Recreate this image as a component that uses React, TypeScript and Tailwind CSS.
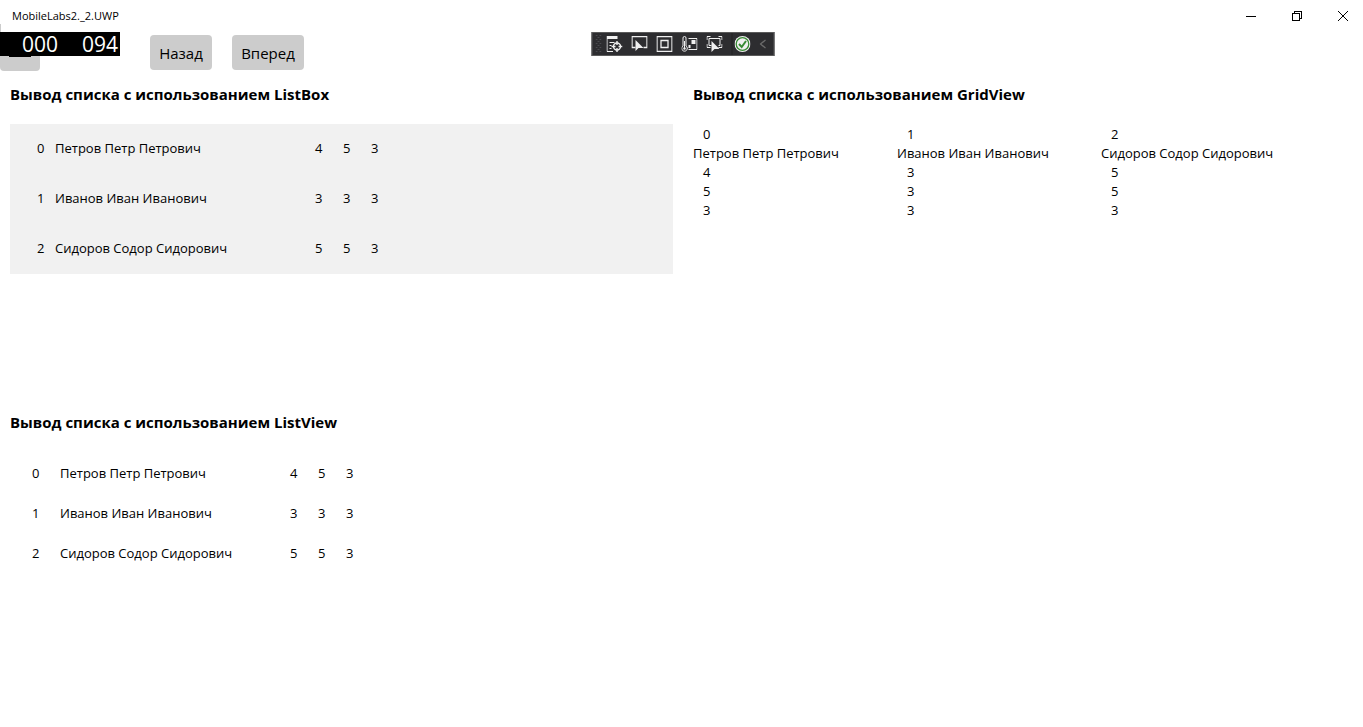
import type { ReactNode } from "react";

type Student = { id: number; name: string; marks: number[] };

const students: Student[] = [
  { id: 0, name: "Петров Петр Петрович", marks: [4, 5, 3] },
  { id: 1, name: "Иванов Иван Иванович", marks: [3, 3, 3] },
  { id: 2, name: "Сидоров Содор Сидорович", marks: [5, 5, 3] },
];

function CaptionButton({ label, children }: { label: string; children: ReactNode }) {
  return (
    <button aria-label={label} className="flex h-8 w-[46px] items-center justify-center">
      <svg width="12" height="12" viewBox="0 0 12 12" fill="none" stroke="#000" shapeRendering="crispEdges">
        {children}
      </svg>
    </button>
  );
}

function TitleBar() {
  return (
    <header className="flex h-8 items-center justify-between pl-3">
      <h1 className="text-[11px] leading-4">MobileLabs2._2.UWP</h1>
      <div className="-mr-[3px] flex">
        <CaptionButton label="Свернуть">
          <path d="M1 6.500h10" />
        </CaptionButton>
        <CaptionButton label="Свернуть в окно">
          <path d="M1.500 3.500h7v7h-7zM3.500 3V1.500h7v7H9" />
        </CaptionButton>
        <CaptionButton label="Закрыть">
          <path d="M1 1l10 10M11 1L1 11" shapeRendering="auto" />
        </CaptionButton>
      </div>
    </header>
  );
}

function ToolButton({ label, children }: { label: string; children: ReactNode }) {
  return (
    <button aria-label={label} className="flex h-full items-center justify-center">
      <svg width="16" height="16" viewBox="0 0 16 16" fill="none" stroke="#f0f0f0">
        {children}
      </svg>
    </button>
  );
}

const POINTER = "M0 0v11l3-3h5z";

function DebugToolbar() {
  return (
    <div
      role="toolbar"
      aria-label="Отладка"
      className="absolute left-[calc(50%+1px)] top-0 flex h-6 w-[183px] -translate-x-1/2 items-center gap-[9px] border border-[#5a5a5a] bg-[#2d2d30] pl-[3px]"
    >
      <svg width="6" height="18" viewBox="0 0 6 18" className="-mr-1 shrink-0 fill-[#4a4a4e]">
        {[0, 4, 8, 12, 16].map((y) => (
          <path key={y} d={`M0 ${y}h2v1h-2zM4 ${y}h2v1h-2zM2 ${y + 2}h2v1h-2z`} />
        ))}
      </svg>
      <ToolButton label="Перейти к динамическому визуальному дереву">
        <path d="M0 1.500h11" strokeWidth="3" />
        <path d="M.5 3v12.500h6M3 6.500h5M3 9.500h2M3 12.500h2" />
        <circle cx="10.500" cy="10.500" r="3.500" strokeWidth="1.400" />
        <path d="M10.500 5v4M10.500 12v4M5 10.500h4M12 10.500h4" strokeWidth="1.400" />
      </ToolButton>
      <ToolButton label="Выбрать элемент">
        <path d="M4 11.500H.5v-11h15v11H12" strokeWidth="1.300" />
        <path d={POINTER} transform="translate(4 4)" fill="#f0f0f0" stroke="none" />
      </ToolButton>
      <ToolButton label="Показать границы">
        <path d="M.5.500h15v15H.5zM4.500 4.500h7v7h-7z" strokeWidth="1.300" />
      </ToolButton>
      <ToolButton label="Производительность">
        <path d="M1.500 10V2a1.500 1.500 0 0 1 3 0v8a2.800 2.800 0 1 1-3 0zM7 2.500h8.500v11H7" />
        <path d="M3 5v7" />
        <path d="M10 4h4v4h-4zM7 9h2v3H7z" fill="#f0f0f0" stroke="none" />
        <circle cx="3" cy="12.500" r="1.200" fill="#f0f0f0" stroke="none" />
      </ToolButton>
      <ToolButton label="Отслеживать фокус">
        <path d="M.5 4V.5H4M12 .5h3.500V4M.5 8v3.500H4M15.500 8v3.500H12M5 9.500H2.500v-7h11v7H12" />
        <path d={POINTER} transform="translate(5 5)" fill="#f0f0f0" stroke="none" />
      </ToolButton>
      <div className="flex h-full gap-[9px] border-l border-[#222] pl-[2px]">
        <ToolButton label="Горячая перезагрузка">
          <circle cx="8" cy="8" r="8" fill="#f0f0f0" stroke="none" />
          <circle cx="8" cy="8" r="6.300" stroke="#388a34" strokeWidth="1.300" />
          <path d="M4.500 8l2.700 3L11.500 5" stroke="#388a34" strokeWidth="2" />
        </ToolButton>
        <button aria-label="Свернуть панель" className="flex h-full items-center">
          <svg width="8" height="10" viewBox="0 0 8 10" fill="none" stroke="#6a6a6a" strokeWidth="1.300">
            <path d="M6 1L1 5l5 4" />
          </svg>
        </button>
      </div>
    </div>
  );
}

function FrameCounter() {
  return (
    <div className="absolute left-0 top-0 h-6 w-[120px] bg-black">
      <div className="absolute -top-2 left-0 h-2 w-px bg-[#ccc]" />
      <div className="flex justify-end gap-6 pr-[2px] text-[21px] leading-6 text-white">
        <span>000</span>
        <span>094</span>
      </div>
      <div className="absolute left-[9px] top-6 h-px w-[22px] bg-black" />
    </div>
  );
}

function NavBar() {
  return (
    <nav className="relative flex h-10 items-start pt-[3px]">
      <button aria-label="Меню" className="h-9 w-10 rounded-sm bg-[#ccc]" />
      <FrameCounter />
      <div className="ml-[110px] flex gap-5 text-[15px] leading-[37px]">
        <button className="h-[35px] w-[62px] rounded-sm bg-[#ccc]">Назад</button>
        <button className="h-[35px] w-[72px] rounded-sm bg-[#ccc]">Вперед</button>
      </div>
      <DebugToolbar />
    </nav>
  );
}

function Section({ title, children }: { title: string; children: ReactNode }) {
  return (
    <section className="px-[10px] pt-3">
      <h2 className="text-[15px] font-bold leading-5">{title}</h2>
      {children}
    </section>
  );
}

function Marks({ marks }: { marks: number[] }) {
  return (
    <span className="flex gap-5">
      {marks.map((mark, i) => (
        <span key={i} className="w-2">
          {mark}
        </span>
      ))}
    </span>
  );
}

export default function App() {
  return (
    <div className="flex min-h-screen flex-col overflow-x-hidden bg-white font-['Open_Sans','Noto_Sans',sans-serif] text-[13px] leading-[19px] text-black">
      <TitleBar />
      <NavBar />
      <main className="grid flex-1 grid-cols-[683fr_680fr] grid-rows-2">
        <Section title="Вывод списка с использованием ListBox">
          <ul className="mt-5 bg-[#f1f1f1]">
            {students.map((s) => (
              <li key={s.id} className="flex h-[50px] items-center pb-[2px] pl-[27px]">
                <span className="w-[18px]">{s.id}</span>
                <span className="w-[260px]">{s.name}</span>
                <Marks marks={s.marks} />
              </li>
            ))}
          </ul>
        </Section>
        <Section title="Вывод списка с использованием GridView">
          <ul className="mt-[21px] flex">
            {students.map((s) => (
              <li key={s.id} className="w-[204px]">
                <p className="pl-[10px]">{s.id}</p>
                <p>{s.name}</p>
                {s.marks.map((mark, i) => (
                  <p key={i} className="pl-[10px]">
                    {mark}
                  </p>
                ))}
              </li>
            ))}
          </ul>
        </Section>
        <Section title="Вывод списка с использованием ListView">
          <ul className="mt-[22px]">
            {students.map((s) => (
              <li key={s.id} className="flex h-10 items-center pl-[22px]">
                <span className="w-7">{s.id}</span>
                <span className="w-[230px]">{s.name}</span>
                <Marks marks={s.marks} />
              </li>
            ))}
          </ul>
        </Section>
      </main>
    </div>
  );
}
